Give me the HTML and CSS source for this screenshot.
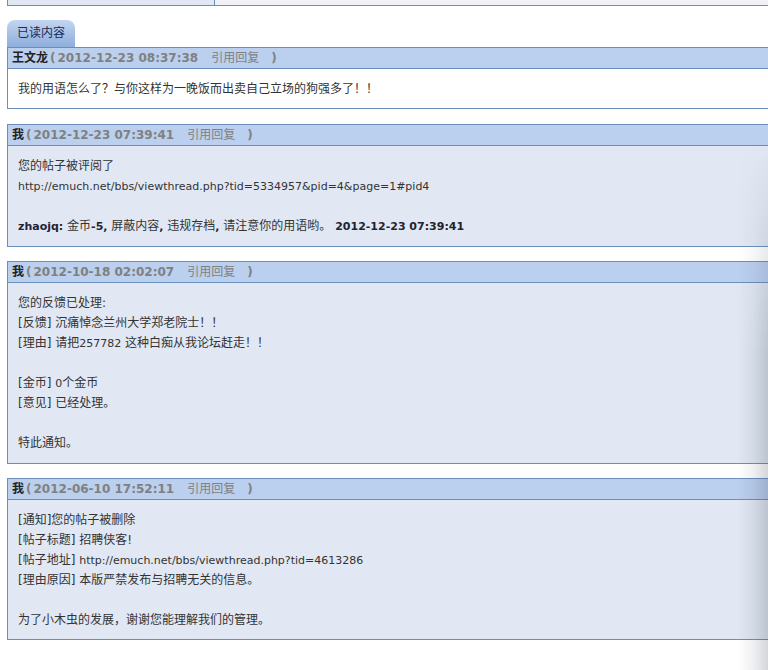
FILE: index.html
```html
<!DOCTYPE html>
<html>
<head>
<meta charset="utf-8">
<link rel="stylesheet" href="styles.css">
</head>
<body>
<div class="page">
  <div class="toptable">
    <div class="tcell left"></div>
    <div class="tcell right"></div>
  </div>
  <div class="tabs"><span class="tab">已读内容</span></div>

  <div class="msg first">
    <div class="mhead"><span class="who">王文龙</span><span class="meta">(<span class="date">2012-12-23 08:37:38</span><span class="quote">引用回复</span>)</span></div>
    <div class="mbody white">
      <div class="ln">我的用语怎么了？与你这样为一晚饭而出卖自己立场的狗强多了！！</div>
    </div>
  </div>

  <div class="msg">
    <div class="mhead"><span class="who">我</span><span class="meta">(<span class="date">2012-12-23 07:39:41</span><span class="quote">引用回复</span>)</span></div>
    <div class="mbody tall">
      <div class="ln">您的帖子被评阅了</div>
      <div class="ln"><span class="en">http://emuch.net/bbs/viewthread.php?tid=5334957&amp;pid=4&amp;page=1#pid4</span></div>
      <div class="ln"></div>
      <div class="ln"><b class="en">zhaojq:</b> 金币<b class="en">-5,</b> 屏蔽内容<b class="en">,</b> 违规存档<b class="en">,</b> 请注意你的用语哟。 <b class="en">2012-12-23 07:39:41</b></div>
    </div>
  </div>

  <div class="msg">
    <div class="mhead"><span class="who">我</span><span class="meta">(<span class="date">2012-10-18 02:02:07</span><span class="quote">引用回复</span>)</span></div>
    <div class="mbody tall">
      <div class="ln">您的反馈已处理:</div>
      <div class="ln">[反馈] 沉痛悼念兰州大学郑老院士！！</div>
      <div class="ln">[理由] 请把<span class="en">257782</span> 这种白痴从我论坛赶走！！</div>
      <div class="ln"></div>
      <div class="ln">[金币] <span class="en">0</span>个金币</div>
      <div class="ln">[意见] 已经处理。</div>
      <div class="ln"></div>
      <div class="ln">特此通知。</div>
    </div>
  </div>

  <div class="msg">
    <div class="mhead"><span class="who">我</span><span class="meta">(<span class="date">2012-06-10 17:52:11</span><span class="quote">引用回复</span>)</span></div>
    <div class="mbody">
      <div class="ln">[通知]您的帖子被删除</div>
      <div class="ln">[帖子标题] 招聘侠客!</div>
      <div class="ln">[帖子地址] <span class="en">http://emuch.net/bbs/viewthread.php?tid=4613286</span></div>
      <div class="ln">[理由原因] 本版严禁发布与招聘无关的信息。</div>
      <div class="ln"></div>
      <div class="ln">为了小木虫的发展，谢谢您能理解我们的管理。</div>
    </div>
  </div>
</div>
<div class="shadow"></div>
</body>
</html>
```
FILE: styles.css
```css
html, body {
  margin: 0;
  padding: 0;
  background: #ffffff;
  overflow: hidden;
}
body {
  font-family: "DejaVu Sans", "Noto Sans CJK SC", sans-serif;
  font-size: 12px;
  color: #333333;
  width: 768px;
  height: 670px;
  position: relative;
}
.page {
  padding-left: 7px;
}
.toptable {
  display: flex;
  height: 5px;
  border-left: 1px solid #6b8fbc;
  border-bottom: 1px solid #6b8fbc;
}
.tcell.left {
  width: 206px;
  background: #e2e8f3;
  border-right: 1px solid #6b8fbc;
}
.tcell.right {
  flex: 1;
  background: #f1f1f6;
}
.tabs {
  margin-top: 14px;
  height: 27px;
  display: flex;
  align-items: flex-end;
}
.tab {
  display: block;
  width: 68px;
  height: 27px;
  box-sizing: border-box;
  padding-left: 10px;
  line-height: 27px;
  border-radius: 8px 8px 0 0;
  background: linear-gradient(#c3d5f1, #8eaedb);
  color: #1a2a52;
  font-size: 12px;
}
.msg {
  border: 1px solid #6b8fbc;
  border-right: none;
  margin-bottom: 14px;
}
.msg.first {
  margin-bottom: 15px;
}
.mhead {
  height: 20px;
  line-height: 20px;
  background: #bbcfef;
  border-bottom: 1px solid #6b8fbc;
  padding-left: 4px;
  font-size: 12px;
  font-weight: bold;
  white-space: nowrap;
}
.who {
  color: #222222;
}
.meta {
  color: #808080;
  margin-left: 2px;
}
.date {
  margin-left: 2px;
}
.quote {
  font-weight: normal;
  margin: 0 12px 0 13px;
}
.mbody {
  background: #e1e8f3;
  padding: 10px 10px 9px;
  white-space: nowrap;
}
.mbody.tall {
  padding-bottom: 10px;
}
.mbody.white {
  background: #ffffff;
}
.ln {
  height: 20px;
  line-height: 20px;
  font-size: 12px;
  color: #333333;
}
.en {
  font-size: 11px;
}
.ln b {
  color: #222233;
}
.shadow {
  position: absolute;
  right: 0;
  top: 140px;
  width: 30px;
  height: 530px;
  pointer-events: none;
  background: linear-gradient(to right, rgba(60,70,90,0), rgba(60,70,90,0.08) 50%, rgba(60,70,90,0.22));
  -webkit-mask-image: linear-gradient(to bottom, transparent, #000 40%);
  mask-image: linear-gradient(to bottom, transparent, #000 40%);
}
```
